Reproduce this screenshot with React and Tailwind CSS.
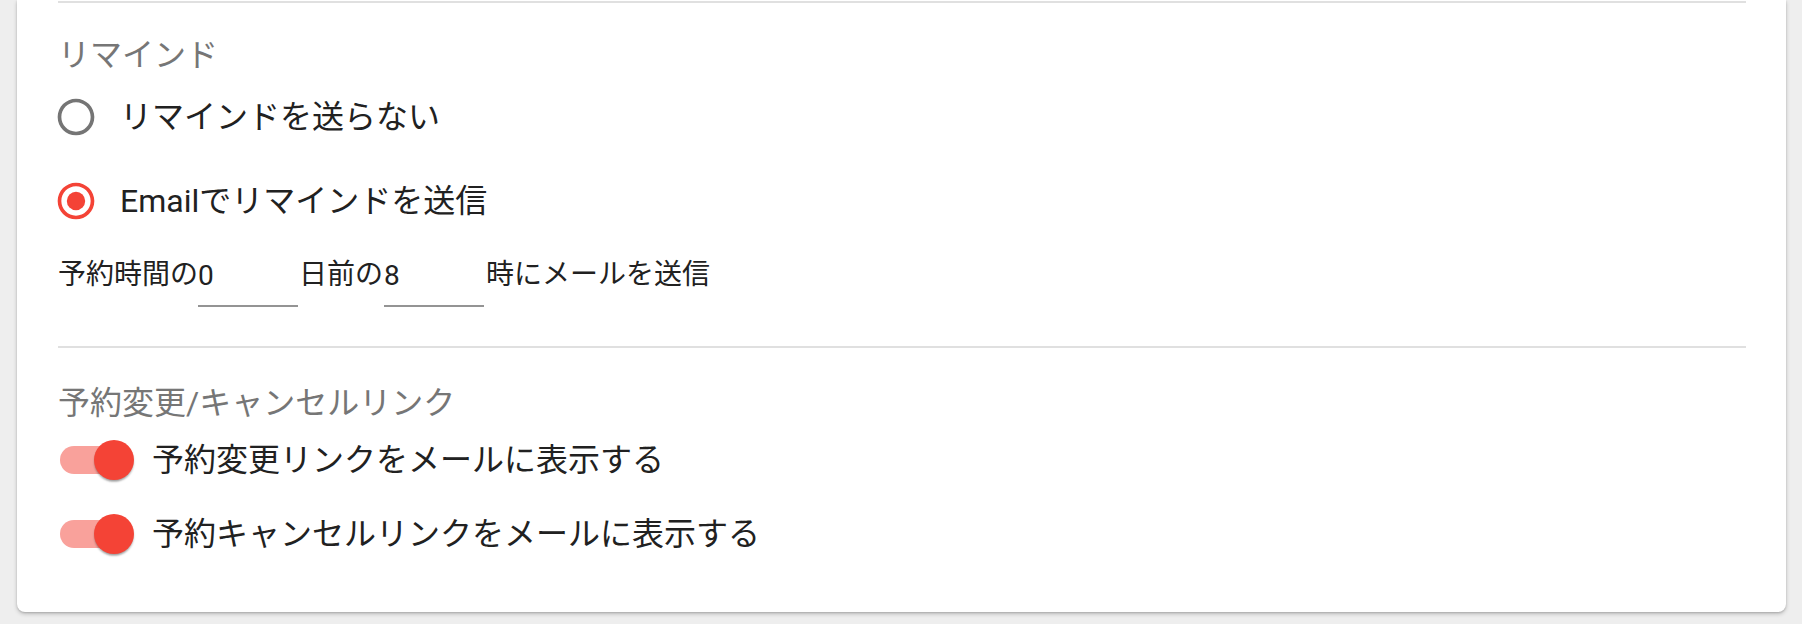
// Reminder + change/cancel link settings card

const FONT = { fontFamily: 'Roboto, "Noto Sans CJK JP", sans-serif' };

function RadioIcon({ checked }) {
  return (
    <svg viewBox="0 0 24 24" className="w-[44px] h-[44px] shrink-0" fill={checked ? '#f44336' : '#757575'}>
      <path d="M12 2C6.48 2 2 6.48 2 12s4.48 10 10 10 10-4.48 10-10S17.52 2 12 2zm0 18c-4.42 0-8-3.58-8-8s3.58-8 8-8 8 3.58 8 8-3.58 8-8 8z" />
      {checked && <circle cx="12" cy="12" r="5" />}
    </svg>
  );
}

function RadioRow({ checked, label }) {
  return (
    <label className="flex items-center h-[84px] gap-[22px] -ml-[4px] cursor-pointer">
      <RadioIcon checked={checked} />
      <span className="text-[32px] leading-[40px] text-[#212121]">{label}</span>
    </label>
  );
}

function SwitchRow({ label }) {
  return (
    <div className="flex items-center h-[74px]">
      <div className="relative w-[74px] h-[40px] shrink-0 ml-[2px]">
        <div className="absolute left-0 top-[6px] w-[68px] h-[28px] rounded-full bg-[#f9a19b]" />
        <div className="absolute right-0 top-0 w-[40px] h-[40px] rounded-full bg-[#f44336] shadow-[0_2px_2px_0_rgba(0,0,0,0.24),0_3px_2px_-2px_rgba(0,0,0,0.2)]" />
      </div>
      <span className="ml-[18px] text-[32px] leading-[40px] text-[#212121]">{label}</span>
    </div>
  );
}

function Divider() {
  return <div className="h-[2px] bg-[#e0e0e0]" />;
}

function NumberField({ value }) {
  return (
    <input
      readOnly
      value={value}
      className="w-[100px] h-[52px] pb-[10px] border-b-2 border-[#949494] bg-transparent text-[28px] leading-[40px] text-[#212121] outline-none"
      style={FONT}
    />
  );
}

export default function App() {
  return (
    <div className="min-h-[624px] bg-[#eeeeee] pl-[17px] pr-[16px]" style={FONT}>
      <div className="bg-white rounded-b-[8px] pl-[41px] pr-10 pt-[1px] pb-[41px] shadow-[0_2px_4px_0_rgba(0,0,0,0.2),0_1px_2px_0_rgba(0,0,0,0.14)]">
        <Divider />

        <div className="mt-[32px] text-[32px] leading-[40px] text-[#767676]">リマインド</div>
        <RadioRow checked={false} label="リマインドを送らない" />
        <RadioRow checked label="Emailでリマインドを送信" />

        <div className="flex items-start mt-[12px] text-[28px] leading-[40px] text-[#212121]">
          <span>予約時間の</span>
          <NumberField value="0" />
          <span className="ml-[1px] mr-[1px]">日前の</span>
          <NumberField value="8" />
          <span className="ml-[2px]">時にメールを送信</span>
        </div>

        <div className="mt-[39px]">
          <Divider />
        </div>

        <div className="mt-[35px] text-[32px] leading-[40px] text-[#767676]">予約変更/キャンセルリンク</div>
        <SwitchRow label="予約変更リンクをメールに表示する" />
        <SwitchRow label="予約キャンセルリンクをメールに表示する" />
      </div>
    </div>
  );
}
